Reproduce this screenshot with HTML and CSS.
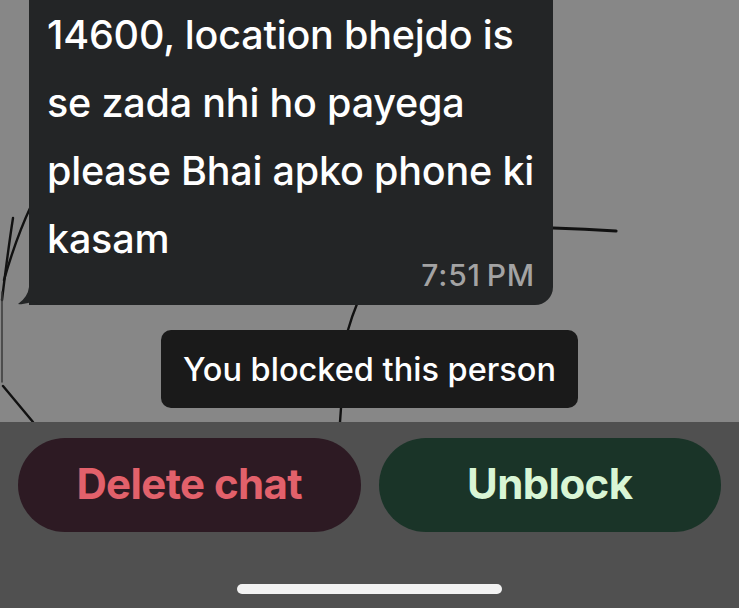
FILE: index.html
```html
<!DOCTYPE html>
<html lang="en">
<head>
<meta charset="utf-8">
<title>Blocked chat</title>
<link rel="stylesheet" href="styles.css">
</head>
<body>
<div class="screen">
  <section class="chat">
    <svg class="wallpaper" width="739" height="422" viewBox="0 0 739 422" aria-hidden="true">
      <path d="M13 218 Q8 250 2 300" />
      <path d="M31 206 Q16 238 4 280" />
      <path d="M2 292 L2 382" class="thin" />
      <path d="M3 386 Q18 404 33 422" />
      <path d="M553 228 Q585 229 616 231" class="thick" />
      <path d="M357 304 Q352 316 348 330" />
      <path d="M341 408 L340 422" />
    </svg>
    <div class="bubble">
      <p class="msg">
        <span class="line">14600, location bhejdo is</span>
        <span class="line">se zada nhi ho payega</span>
        <span class="line">please Bhai apko phone ki</span>
        <span class="line">kasam</span>
      </p>
      <div class="time">7:51&#8201;PM</div>
      <svg class="tail" width="24" height="22" viewBox="0 0 24 22" aria-hidden="true">
        <path d="M11 0 L11 4 Q10 14 0 21 Q8 22 15 18 Q19 21 24 22 L24 0 Z" />
      </svg>
    </div>
    <div class="notice">You blocked this person</div>
  </section>
  <section class="actions">
    <div class="buttons">
      <button class="btn btn-delete">Delete chat</button>
      <button class="btn btn-unblock">Unblock</button>
    </div>
    <div class="home-bar"></div>
  </section>
</div>
</body>
</html>
```

FILE: styles.css
```css
* {
  box-sizing: border-box;
}

html, body {
  margin: 0;
  padding: 0;
}

body {
  width: 739px;
  height: 608px;
  overflow: hidden;
  background: #505050;
  font-family: Inter, "Liberation Sans", sans-serif;
}

.screen {
  display: flex;
  flex-direction: column;
  height: 608px;
}

.chat {
  position: relative;
  height: 422px;
  background: #878787;
  display: flex;
  flex-direction: column;
  align-items: flex-start;
}

.wallpaper {
  position: absolute;
  left: 0;
  top: 0;
}

.wallpaper path {
  fill: none;
  stroke: #111;
  stroke-width: 2.4;
  stroke-linecap: round;
}

.wallpaper path.thin {
  stroke: #3a3a3a;
  stroke-width: 1.5;
}

.wallpaper path.thick {
  stroke-width: 3.2;
}

.bubble {
  position: relative;
  margin-left: 29px;
  width: 524px;
  background: #232526;
  border-radius: 0 0 18px 0;
  padding: 1px 18px 8px 18px;
  z-index: 1;
}

.msg {
  margin: 0;
  height: 252px;
  display: flex;
  flex-direction: column;
  align-items: flex-start;
  color: #fff;
  font-size: 39.5px;
  font-weight: 500;
  line-height: 68px;
  letter-spacing: -0.2px;
}

.line {
  display: block;
  height: 68px;
  white-space: nowrap;
}

.line:last-child {
  height: 48px;
}

.time {
  text-align: right;
  color: #a3a3a3;
  font-size: 30px;
  font-weight: 500;
  line-height: 44px;
  letter-spacing: 0.8px;
}

.tail {
  position: absolute;
  left: -11px;
  bottom: 0;
}

.tail path {
  fill: #232526;
}

.notice {
  position: relative;
  z-index: 1;
  align-self: center;
  margin-top: 25px;
  height: 78px;
  display: flex;
  align-items: center;
  padding: 0 22px;
  background: #1a1a1a;
  border-radius: 10px;
  color: #fff;
  font-size: 32.5px;
  font-weight: 500;
}

.actions {
  flex: 1;
  display: flex;
  flex-direction: column;
  align-items: center;
  padding: 16px 18px 14px;
  background: #505050;
}

.buttons {
  width: 100%;
  display: grid;
  grid-template-columns: 1fr 1fr;
  gap: 18px;
}

.btn {
  height: 94px;
  border: none;
  border-radius: 47px;
  font-family: Inter, "Liberation Sans", sans-serif;
  font-size: 42px;
  font-weight: 700;
  letter-spacing: -0.6px;
  padding: 0 0 4px;
}

.btn-delete {
  background: #2d1a23;
  color: #e2616b;
}

.btn-unblock {
  background: #1a3428;
  color: #d9f6d5;
}

.home-bar {
  margin-top: auto;
  width: 265px;
  height: 10px;
  border-radius: 5px;
  background: #f2f2f2;
}
```
